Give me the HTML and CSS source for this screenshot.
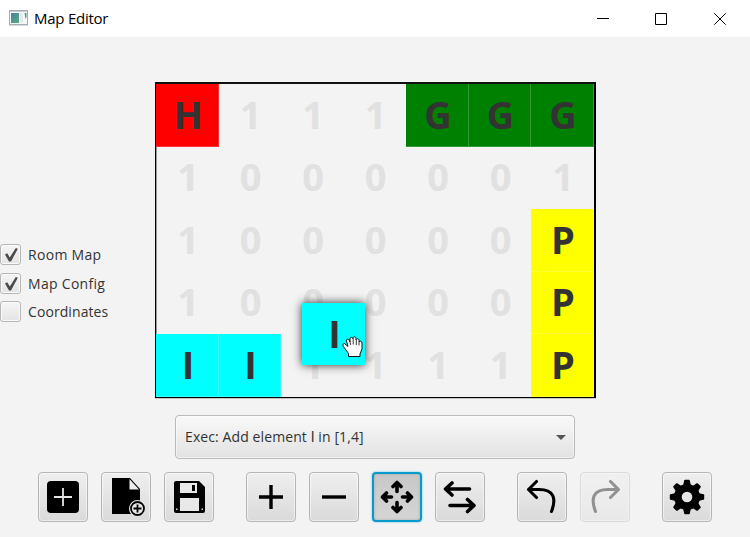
FILE: index.html
```html
<!DOCTYPE html>
<html lang="en">
<head>
<meta charset="utf-8">
<title>Map Editor</title>
<link rel="stylesheet" href="styles.css">
</head>
<body>
<header class="titlebar">
  <svg class="app-icon" width="19" height="16" viewBox="0 0 19 16">
    <defs><linearGradient id="pane" x1="0" y1="0" x2="1" y2="1"><stop offset="0" stop-color="#4a7fa5"/><stop offset="1" stop-color="#58ac82"/></linearGradient></defs>
    <rect x=".5" y=".5" width="18" height="14" fill="#f5f7f8" stroke="#a5adb5"/>
    <path d="M1 1.5h17" stroke="#c3ccd5"/><rect x="2" y="3" width="8" height="10" fill="url(#pane)"/>
    <rect x="11" y="3" width="3" height="10" fill="#e7eaec"/><path d="M15.5 3h2v4l-1 2z" fill="#4f9b84"/><path d="M0 15.5h19" stroke="#d6d9dc"/>
  </svg>
  <h1 class="title">Map Editor</h1>
  <div class="window-controls">
    <svg width="12" height="12" viewBox="0 0 12 12"><path d="M0 5.5h12"/></svg>
    <svg width="12" height="12" viewBox="0 0 12 12"><path d="M.5.5h11v11H.5z"/></svg>
    <svg width="12" height="12" viewBox="0 0 12 12"><path d="M.3.3l11.4 11.4M11.7.3L.3 11.7"/></svg>
  </div>
</header>
<main class="workspace">
  <aside class="layers">
    <label class="check"><span class="box"><svg width="15" height="16" viewBox="0 0 15 16"><path d="M1 7.4l2.2-1.1 2.6 4.1L11.8 1l2 .8-6.8 12.7H5z"/></svg></span><span>Room Map</span></label>
    <label class="check"><span class="box"><svg width="15" height="16" viewBox="0 0 15 16"><path d="M1 7.4l2.2-1.1 2.6 4.1L11.8 1l2 .8-6.8 12.7H5z"/></svg></span><span>Map Config</span></label>
    <label class="check"><span class="box"></span><span>Coordinates</span></label>
  </aside>
  <section class="map">
    <div class="cell home">H</div><div class="cell">1</div><div class="cell">1</div><div class="cell">1</div><div class="cell green">G</div><div class="cell green">G</div><div class="cell green">G</div>
    <div class="cell">1</div><div class="cell">0</div><div class="cell">0</div><div class="cell">0</div><div class="cell">0</div><div class="cell">0</div><div class="cell">1</div>
    <div class="cell">1</div><div class="cell">0</div><div class="cell">0</div><div class="cell">0</div><div class="cell">0</div><div class="cell">0</div><div class="cell yellow">P</div>
    <div class="cell">1</div><div class="cell">0</div><div class="cell">0</div><div class="cell">0</div><div class="cell">0</div><div class="cell">0</div><div class="cell yellow">P</div>
    <div class="cell cyan">I</div><div class="cell cyan">I</div><div class="cell">1</div><div class="cell">1</div><div class="cell">1</div><div class="cell">1</div><div class="cell yellow">P</div>
    <div class="cell cyan dragged">I
      <svg class="hand" width="21" height="22" viewBox="0 0 21 22"><path d="M6.5 20.5v-3L2.5 12C.5 10 .5 7.500 2.500 7.500L6 10.500 4.500 5C4 3 6.500 2.500 7 4L8 6V3C8 .7 11 .7 11 3v-.5C11 .2 14 .2 14 2.500V4c.3-2 3-1.500 3 .3V6c.5-1.500 3-1 3 1v6l-2 5v2.500z" fill="#fff" stroke="#111"/><path d="M8 6l.7 3M11.200 3v5.500M14.300 4v5M17 6v3.500" fill="none" stroke="#222" stroke-width=".9"/></svg>
    </div>
  </section>
</main>
<div class="combo"><span>Exec: Add element <span class="element">I</span> in [1,4]</span><i class="arrow"></i></div>
<nav class="toolbar">
  <div class="group">
    <button class="tool" aria-label="New"><svg viewBox="0 0 50 50"><rect x="9" y="9" width="32" height="32" rx="4"/><path class="line light" d="M25 16v18M16 25h18"/></svg></button>
    <button class="tool" aria-label="New file"><svg viewBox="0 0 50 50"><path d="M11 6h18l10 11v25H11z"/><path d="M28.500 7v10.500H38z" fill="#eee"/><circle cx="36.500" cy="36.500" r="8.500" fill="#e5e5e5"/><circle class="line" cx="36.500" cy="36.500" r="6.500"/><path class="line" d="M36.500 32.500v8M32.500 36.500h8"/></svg></button>
    <button class="tool" aria-label="Save"><svg viewBox="0 0 50 50"><path d="M12 9h23l6 6v24q0 2-2 2H12q-2 0-2-2V11q0-2 2-2z"/><path d="M16 11h17v10H16zM16 26h19v13H16z" fill="#e8e8e8"/><path d="M28 13h3v6h-3z"/><path d="M12 36.500h1.500V38H12zM37.500 36.500H39V38h-1.500z" fill="#ddd"/></svg></button>
  </div>
  <div class="group">
    <button class="tool" aria-label="Zoom in"><svg viewBox="0 0 50 50"><path d="M23.300 13h3.400v24h-3.400zM13 23.300h24v3.400H13z"/></svg></button>
    <button class="tool" aria-label="Zoom out"><svg viewBox="0 0 50 50"><path d="M13 23.300h24v3.400H13z"/></svg></button>
    <button class="tool active" aria-label="Move"><svg viewBox="0 0 50 50"><path class="thick" d="M25 19.500v-8.500M21 14.500l4-4 4 4M25 30.500V39M21 35.500l4 4 4-4M19.500 25H11M14.500 21l-4 4 4 4M30.500 25H39M35.500 21l4 4-4 4"/></svg></button>
    <button class="tool" aria-label="Swap"><svg viewBox="0 0 50 50"><path class="thick" d="M34.500 17H10.500M17 11l-6.500 6 6.500 6M15 33.500h24M32.500 27.500l6.500 6-6.500 6"/></svg></button>
  </div>
  <div class="group">
    <button class="tool" aria-label="Undo"><svg viewBox="0 0 50 50"><path class="thick thin" d="M19.500 9.500l-8 8 8 8M12 17.500h10c15 0 17.500 9 12.500 22"/></svg></button>
    <button class="tool disabled" aria-label="Redo"><svg viewBox="0 0 50 50"><path class="thick thin" d="M30.500 9.500l8 8-8 8M38 17.500H28c-15 0-17.500 9-12.500 22"/></svg></button>
  </div>
  <div class="group">
    <button class="tool" aria-label="Settings"><svg viewBox="0 0 50 50"><g id="gear"><circle cx="25" cy="25" r="13"/><g id="teeth"><path id="tooth" d="M21 14l1.200-5.500q.2-.7 1-.7h3.600q.8 0 1 .7L29 14z"/><use href="#tooth" transform="rotate(90 25 25)"/><use href="#tooth" transform="rotate(180 25 25)"/><use href="#tooth" transform="rotate(270 25 25)"/></g><use href="#teeth" transform="rotate(45 25 25)"/></g><circle cx="25" cy="25" r="5.300" fill="#e6e6e6"/></svg></button>
  </div>
</nav>
</body>
</html>
```
FILE: styles.css
```css
* { box-sizing: border-box; }
body {
  margin: 0;
  width: 750px;
  height: 537px;
  overflow: hidden;
  display: flex;
  flex-direction: column;
  background: #f3f3f3;
  color: #333;
  font: 14px/20px "Open Sans", "Noto Sans", sans-serif;
}
.titlebar {
  height: 37px;
  display: flex;
  align-items: center;
  padding: 0 24px 0 9px;
  background: #fff;
  color: #000;
}
.app-icon { margin-top: -1px; }
.title { margin: -2px 0 0 6px; font-size: 15px; font-weight: 400; letter-spacing: -.25px; }
.window-controls { display: flex; gap: 46.500px; margin-left: auto; }
.window-controls svg { fill: none; stroke: #000; stroke-width: 1; }
.window-controls svg:nth-child(2) { margin: 0 .5px 0 -.5px; }
.workspace { height: 361px; display: flex; padding-top: 45px; }
.layers {
  width: 155px;
  padding-top: 162px;
  display: flex;
  flex-direction: column;
  gap: 7.500px;
}
.check { height: 21px; display: flex; align-items: center; gap: 7px; white-space: nowrap; letter-spacing: .3px; }
.check:nth-child(2) { position: relative; top: .5px; }
.check:nth-child(3) { letter-spacing: .08px; }
.box {
  width: 21px;
  height: 21px;
  display: grid;
  place-items: center;
  border: 1px solid #b6b6b6;
  border-radius: 3px;
  background: linear-gradient(#f5f5f5, #e4e4e4);
  box-shadow: inset 0 0 0 1px #fafafa;
}
.box svg { margin-left: 1px; fill: #4a4a4a; }
.map {
  position: relative;
  width: 441px;
  height: 316px;
  display: grid;
  grid-template: repeat(5, 62.500px) / repeat(7, 62.500px);
  border: solid #000;
  border-width: 2px 2px 1px 1px;
  border-top-color: #111;
  box-shadow: inset 1px 0 #999, 0 1px #c4c4c4;
}
.cell {
  display: grid;
  place-items: center;
  padding: 0 0 3px 1.500px;
  color: #e1e1e1;
  font-size: 38px;
  font-weight: 700;
  line-height: 52px;
}
.home, .green, .yellow, .cyan { padding: 0 0 2px 2.500px; color: #333; border: solid rgba(255, 255, 255, .2); border-width: 0 1px 1px 0; }
.home { background: #f00; }
.green { background: #008000; }
.yellow { background: #ff0; }
.cyan { background: #0ff; }
.dragged {
  position: absolute;
  left: 146px;
  top: 219px;
  width: 63px;
  height: 62px;
  padding: 0 0 2px 2px;
  border: 0;
  box-shadow: 0 0 9px rgba(0, 0, 0, .8);
}
.hand { position: absolute; left: 40px; top: 33px; }
.combo {
  width: 400px;
  height: 44px;
  margin: 17px 0 0 175px;
  display: flex;
  align-items: center;
  justify-content: space-between;
  padding: 0 8px 0 9px;
  border: 1px solid #bababa;
  border-radius: 4px;
  background: linear-gradient(#f9f9f9, #e2e2e2);
  box-shadow: inset 0 0 0 1px rgba(255, 255, 255, .5);
  letter-spacing: .1px;
}
.element { font-family: Roboto, sans-serif; }
.arrow { border: solid transparent; border-width: 5px 5px 0; border-top-color: #555; }
.toolbar { display: flex; gap: 32px; margin: 13px 0 0 38px; }
.group { display: flex; gap: 13px; }
.tool {
  width: 50px;
  height: 50px;
  padding: 0;
  display: grid;
  place-items: center;
  border: 1px solid #b5b5b5;
  border-radius: 4px;
  background: linear-gradient(#efefef, #dadada);
  box-shadow: inset 0 0 0 1px rgba(255, 255, 255, .5);
}
.tool svg { width: 50px; height: 50px; margin: -1px; }
.line, .thick { fill: none; stroke: #000; stroke-width: 1.800; }
.light { stroke: #e4e4e4; }
.thick { stroke-width: 3.600; stroke-linecap: round; stroke-linejoin: round; }
.thin { stroke-width: 3.100; }
.active { border: 2px solid #079bcd; background: linear-gradient(#c8c8c8, #d5d5d5); box-shadow: 0 0 2px #48bce0, inset 0 0 3px #a8a8a8; }
.active svg { margin: -2px; }
.disabled { opacity: .4; }
```
